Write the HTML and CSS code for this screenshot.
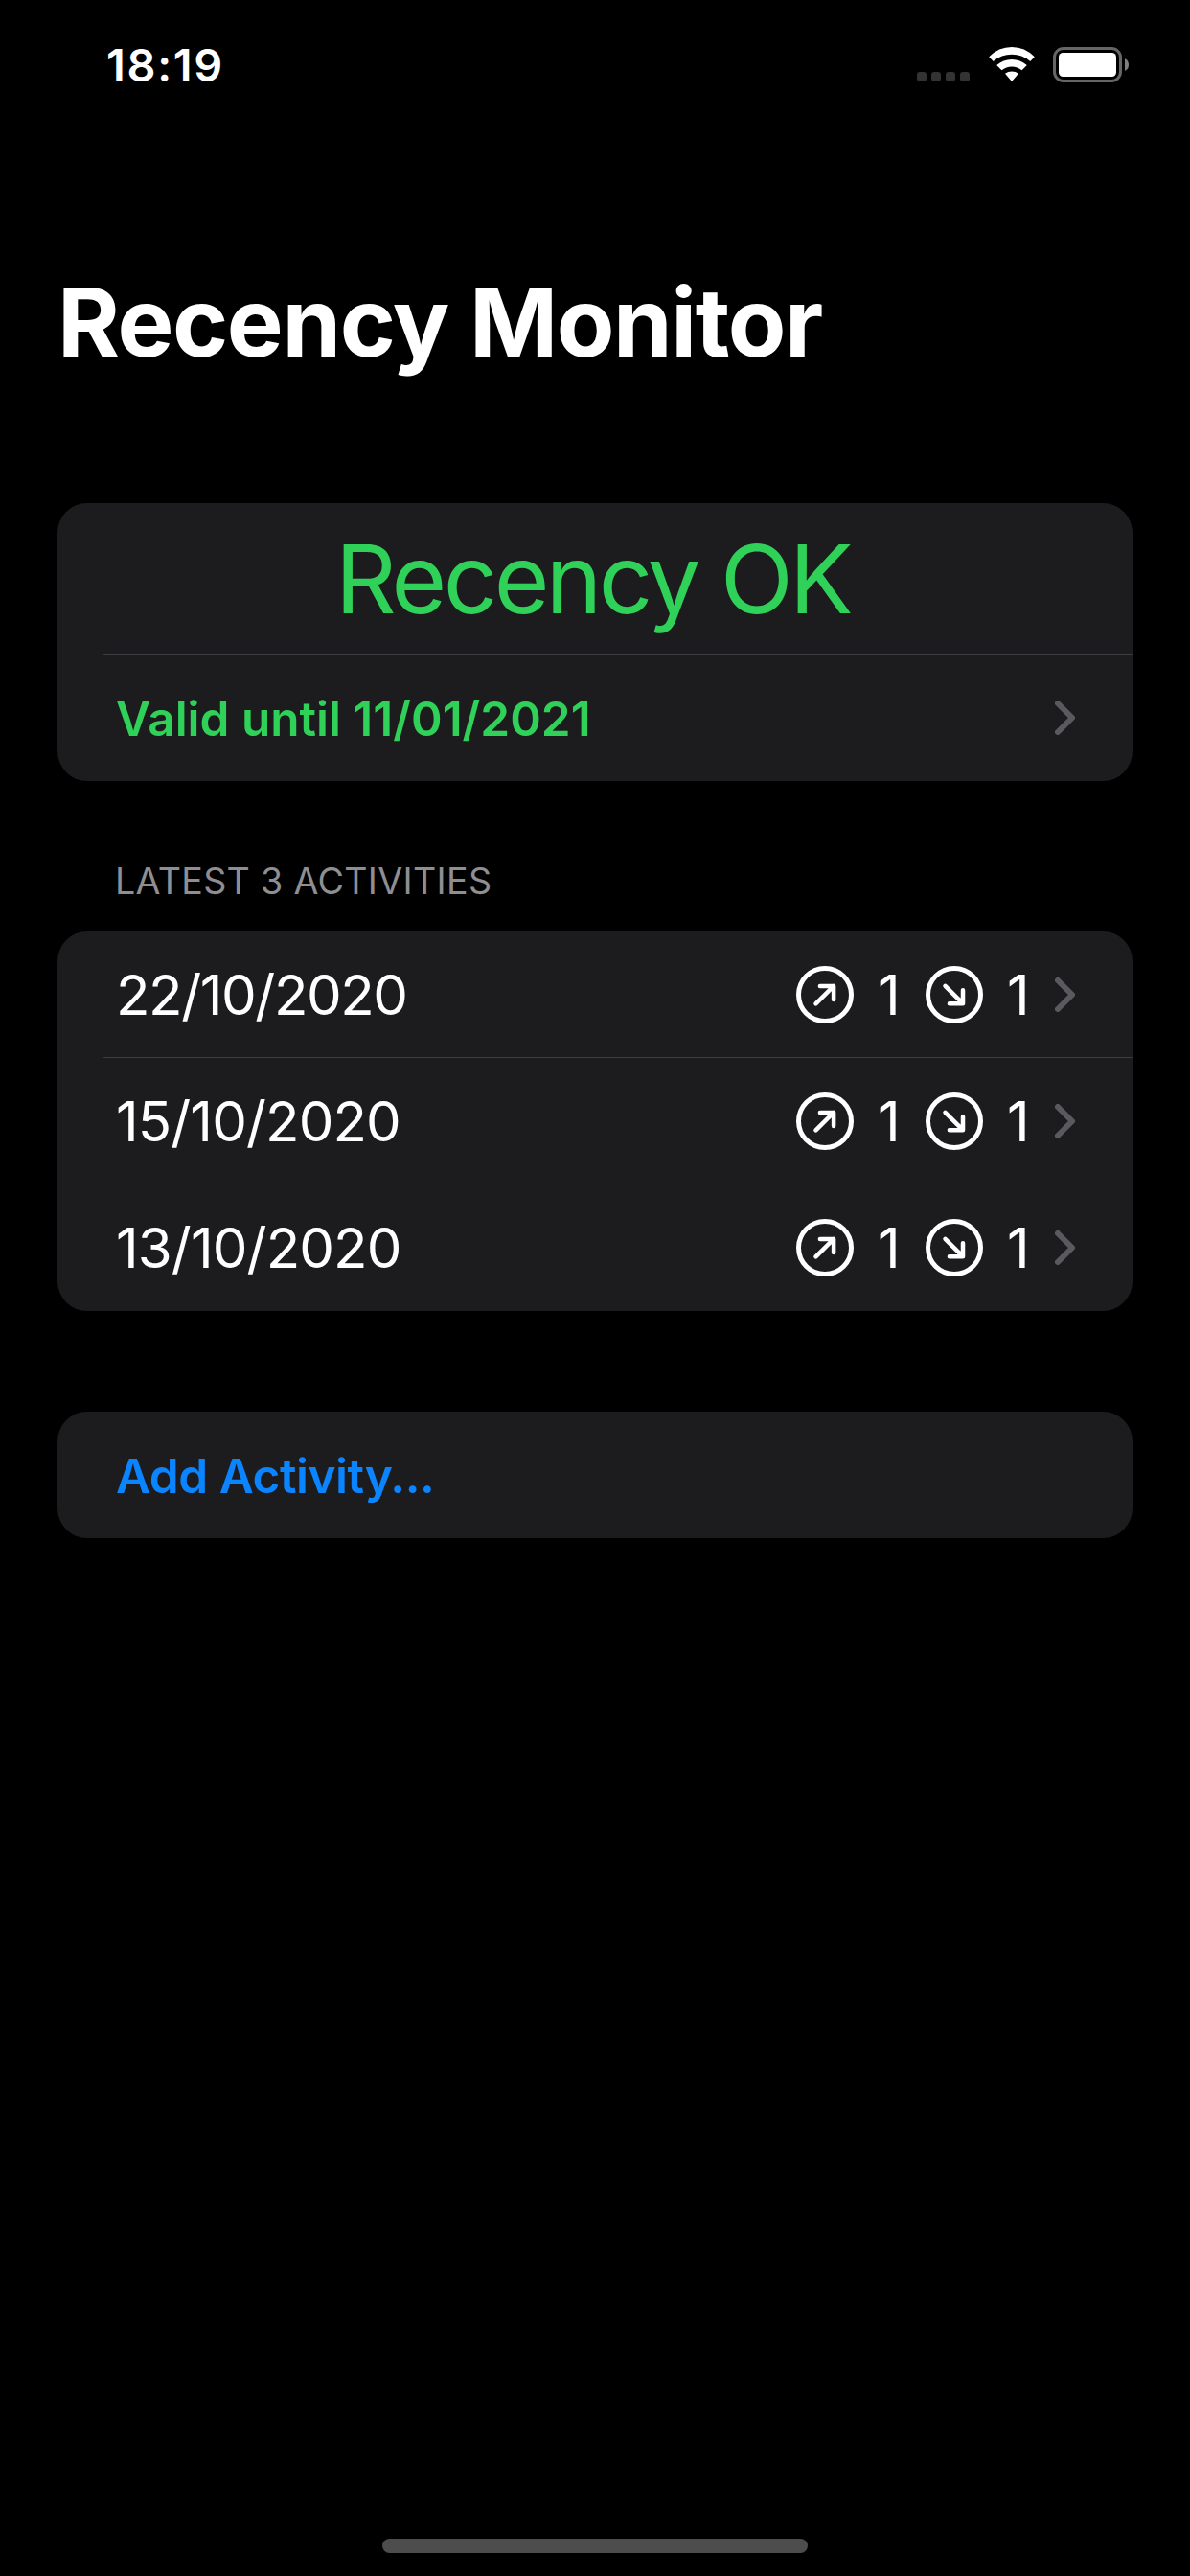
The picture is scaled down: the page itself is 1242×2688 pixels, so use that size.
FILE: index.html
```html
<!DOCTYPE html>
<html lang="en">
<head>
<meta charset="utf-8">
<title>Recency Monitor</title>
<link rel="stylesheet" href="styles.css">
</head>
<body>
<svg class="symbols" aria-hidden="true">
  <symbol id="departure" viewBox="0 0 60 60">
    <circle cx="30" cy="30" r="27.5" stroke-width="5"/>
    <path d="M20.5 39.3L39 21M24.9 21.1H39.1V35.1" stroke-width="4.5"/>
  </symbol>
  <symbol id="arrival" viewBox="0 0 60 60">
    <circle cx="30" cy="30" r="27.5" stroke-width="5"/>
    <path d="M20.5 20.9L39 39.1M24.9 39.2H39V25.2" stroke-width="4.5"/>
  </symbol>
  <symbol id="chevron" viewBox="0 0 21 36">
    <path d="M3 3L18 18L3 33" stroke-width="6"/>
  </symbol>
</svg>
<div class="screen">
  <header class="status">
    <span class="time">18:19</span>
    <div class="indicators">
      <div class="cellular"><i></i><i></i><i></i><i></i></div>
      <svg class="wifi" viewBox="0 0 48 36">
        <path d="M0.2 10.3Q10.3 0 24 0T47.8 10.3L43.3 15Q35 7.8 24 7.8T4.7 15Z"/>
        <path d="M8.2 18.9Q15 12.9 24 12.9T39.8 18.9L34.5 24.3Q30 20.5 24 20.5T13.5 24.3Z"/>
        <path d="M17 27.8Q20 25.5 24 25.5T31 27.8L24.6 35.2Q24 36 23.4 35.2Z"/>
      </svg>
      <svg class="battery" viewBox="0 0 79 37">
        <rect class="shell" x="1.5" y="1.5" width="69" height="34" rx="9.5"/>
        <rect x="6" y="6" width="60" height="25" rx="4.5"/>
        <path class="cap" d="M75 12Q79 14 79 18.5T75 25Z"/>
      </svg>
    </div>
  </header>

  <h1 class="title">Recency Monitor</h1>

  <section class="card summary">
    <div class="row verdict">Recency OK</div>
    <div class="row validity">
      <span class="label">Valid until 11/01/2021</span>
      <svg class="chevron"><use href="#chevron"/></svg>
    </div>
  </section>

  <h2 class="heading">LATEST 3 ACTIVITIES</h2>
  <section class="card activities">
    <div class="row">
      <span class="date tight">22/10/2020</span>
      <svg class="icon"><use href="#departure"/></svg><span class="count">1</span>
      <svg class="icon"><use href="#arrival"/></svg><span class="count">1</span>
      <svg class="chevron"><use href="#chevron"/></svg>
    </div>
    <div class="row">
      <span class="date">15/10/2020</span>
      <svg class="icon"><use href="#departure"/></svg><span class="count">1</span>
      <svg class="icon"><use href="#arrival"/></svg><span class="count">1</span>
      <svg class="chevron"><use href="#chevron"/></svg>
    </div>
    <div class="row">
      <span class="date">13/10/2020</span>
      <svg class="icon"><use href="#departure"/></svg><span class="count">1</span>
      <svg class="icon"><use href="#arrival"/></svg><span class="count">1</span>
      <svg class="chevron"><use href="#chevron"/></svg>
    </div>
  </section>

  <section class="card actions">
    <div class="row add"><span class="label">Add Activity...</span></div>
  </section>

  <div class="home"></div>
</div>
</body>
</html>
```
FILE: styles.css
```css
* { box-sizing: border-box; }

body {
  margin: 0;
  background: #000;
  color: #fff;
  font-family: Inter, "Liberation Sans", sans-serif;
}

.symbols { display: none; }

.screen {
  display: flex;
  flex-direction: column;
  width: 1242px;
  height: 2688px;
  padding: 0 60px 24px;
}

/* Status bar */
.status {
  display: flex;
  justify-content: space-between;
  height: 132px;
  padding: 38px 4px 0 51px;
}

.time {
  font-size: 46.8px;
  font-weight: 600;
  line-height: 60px;
  letter-spacing: 1.7px;
}

.indicators {
  display: flex;
  align-items: flex-start;
  padding-top: 11px;
}

.cellular {
  display: flex;
  gap: 5px;
  margin: 26px 20px 0 0;
}

.cellular i {
  width: 10px;
  height: 10px;
  border-radius: 3px;
  background: #333;
}

.wifi { width: 48px; height: 36px; margin-right: 19px; fill: #fff; }
.battery { width: 79px; height: 37px; fill: #fff; }
.battery .shell { fill: none; stroke: #666; stroke-width: 3; }
.battery .cap { fill: #808080; }

.title {
  margin: 144px 0 129px;
  font-size: 99px;
  font-weight: 700;
  line-height: 120px;
  letter-spacing: -1.4px;
}

/* Grouped list */
.card {
  border-radius: 31px;
  background: #1c1c1e;
}

.row {
  display: flex;
  align-items: center;
  height: 132px;
  padding: 0 60px 0 61px;
}

/* Inset hairline under every row but the last */
.row:not(:last-child) {
  background: linear-gradient(#3d3d41, #3d3d41) 48px 100% / 100% 1px no-repeat;
}

.verdict {
  justify-content: center;
  height: 158px;
  padding: 0 5px 0 0;
  color: #30d158;
  font-size: 99px;
  letter-spacing: -3.6px;
}

.validity {
  justify-content: space-between;
  color: #30d158;
}

.label {
  padding-top: 2px;
  font-size: 49.5px;
  font-weight: 600;
}

.heading {
  margin: 79px 0 27px 60px;
  color: #8e8e93;
  font-size: 37.6px;
  font-weight: 400;
  line-height: 51px;
  letter-spacing: 0.33px;
}

.activities { font-size: 58.2px; }

.date { margin-right: auto; letter-spacing: -0.88px; }
.date.tight { letter-spacing: -1.4px; }

.icon {
  width: 60px;
  height: 60px;
  margin-right: 25px;
  fill: none;
  stroke: #fff;
  stroke-linecap: round;
  stroke-linejoin: round;
}

.count { width: 24px; margin-right: 26px; }

.chevron {
  width: 21px;
  height: 36px;
  fill: none;
  stroke: #5a5a5e;
  stroke-linecap: round;
  stroke-linejoin: round;
}

.actions { margin-top: 105px; }
.add { color: #0a84ff; letter-spacing: -0.45px; }

.home {
  width: 444px;
  height: 15px;
  margin: auto auto 0;
  border-radius: 8px;
  background: #4d4d4d;
}
```
